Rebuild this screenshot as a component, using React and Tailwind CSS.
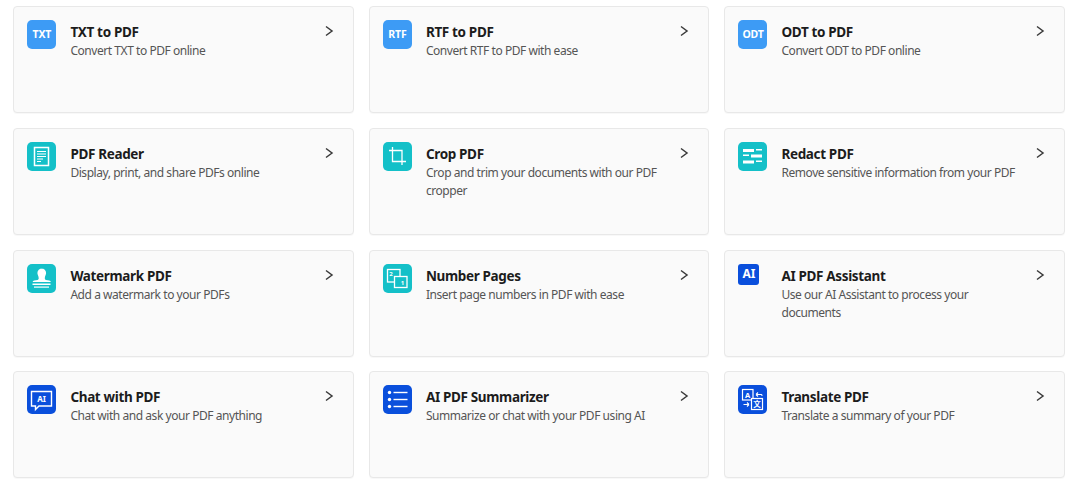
const TEAL = "bg-[#14c0c8]"
const SKY = "bg-[#3d9bf5]"
const BLUE = "bg-[#0a4fdc]"

const TextBadge = ({ label }) => (
  <span className="text-[10.5px] font-bold text-white tracking-[-0.2px]">{label}</span>
)

const ReaderIcon = () => (
  <svg width="29" height="29" viewBox="0 0 29 29" fill="none" stroke="white">
    <rect x="7.5" y="5.5" width="14" height="18" strokeWidth="1.5" />
    <path d="M10 9.5h9M10 12h9M10 14.5h9M10 17h6M10 19.5h4" strokeWidth="1.2" />
  </svg>
)

const CropIcon = () => (
  <svg width="29" height="29" viewBox="0 0 29 29" fill="none" stroke="white" strokeWidth="1.3">
    <path d="M9.5 5V19.5H23M6 8.5H19V23" />
  </svg>
)

const RedactIcon = () => (
  <svg width="29" height="29" viewBox="0 0 29 29" fill="white">
    <rect x="5" y="7" width="11" height="3" />
    <rect x="18" y="7" width="6" height="1.5" />
    <rect x="5" y="12.5" width="6" height="1.5" />
    <rect x="13" y="12.5" width="11" height="3" />
    <rect x="5" y="18.5" width="11" height="3" />
    <rect x="18" y="18.5" width="6" height="1.5" />
  </svg>
)

const StampIcon = () => (
  <svg width="29" height="29" viewBox="0 0 29 29" fill="white">
    <path d="M14.5 4.5a4.6 4.6 0 0 1 4.6 4.6c0 2-1.3 3.2-1.3 5.2 0 .9.4 1.5 1.2 1.6l3.2.5c.9.1 1.6.8 1.6 1.7H5.7c0-.9.7-1.6 1.6-1.7l3.2-.5c.8-.1 1.2-.7 1.2-1.6 0-2-1.3-3.2-1.3-5.2a4.6 4.6 0 0 1 4.6-4.6z" />
    <rect x="5.5" y="19.5" width="18" height="1.5" />
    <rect x="7" y="22.5" width="15" height="1.2" />
  </svg>
)

const NumberIcon = () => (
  <svg width="29" height="29" viewBox="0 0 29 29" fill="none" stroke="white">
    <rect x="4.5" y="5.5" width="12.5" height="12.5" strokeWidth="1.3" />
    <rect x="11.5" y="12.5" width="12.5" height="11" strokeWidth="1.3" fill="#14c0c8" />
    <text x="8" y="12" textAnchor="middle" fontSize="6" fontWeight="700" fill="white" stroke="none">2</text>
    <text x="19.5" y="21" textAnchor="middle" fontSize="6" fontWeight="700" fill="white" stroke="none">1</text>
  </svg>
)

const ChatIcon = () => (
  <svg width="29" height="29" viewBox="0 0 29 29" fill="none">
    <path d="M4.5 6.5h20v14.5H12l-3.5 3.5V21h-4z" stroke="white" strokeWidth="1.4" />
    <text x="14.5" y="16.5" textAnchor="middle" fontSize="8" fontWeight="700" fill="white">AI</text>
  </svg>
)

const ListIcon = () => (
  <svg width="29" height="29" viewBox="0 0 29 29" fill="white">
    <circle cx="6.5" cy="7.5" r="1.7" />
    <circle cx="6.5" cy="14.5" r="1.7" />
    <circle cx="6.5" cy="21.5" r="1.7" />
    <rect x="10.5" y="6.8" width="14" height="1.4" />
    <rect x="10.5" y="13.8" width="14" height="1.4" />
    <rect x="10.5" y="20.8" width="14" height="1.4" />
  </svg>
)

const TranslateIcon = () => (
  <svg width="29" height="29" viewBox="0 0 29 29" fill="none" stroke="white">
    <rect x="4.5" y="4.5" width="10.5" height="10.5" strokeWidth="1.2" />
    <rect x="13.5" y="13.5" width="11" height="11" strokeWidth="1.2" fill="#0a4fdc" />
    <text x="9.7" y="12.5" textAnchor="middle" fontSize="7.5" fontWeight="700" fill="white" stroke="none">A</text>
    <text x="19" y="22" textAnchor="middle" fontSize="7.5" fontWeight="700" fill="white" stroke="none" fontFamily="'Noto Sans CJK SC', sans-serif">文</text>
    <path d="M18 9.5h5.5c0 0 .5 0 .5 1.5M18 9.5l2-2M18 9.5l2 2M11 19.5H5.5M11 19.5l-2-2M11 19.5l-2 2" strokeWidth="1.1" />
  </svg>
)

const AiBadge = () => (
  <div className={`w-[21px] h-[21px] rounded-[3px] flex items-center justify-center text-[12px] font-bold text-white ${BLUE}`}>
    AI
  </div>
)

const tools = [
  { title: "TXT to PDF", desc: "Convert TXT to PDF online", color: SKY, icon: <TextBadge label="TXT" /> },
  { title: "RTF to PDF", desc: "Convert RTF to PDF with ease", color: SKY, icon: <TextBadge label="RTF" /> },
  { title: "ODT to PDF", desc: "Convert ODT to PDF online", color: SKY, icon: <TextBadge label="ODT" /> },
  { title: "PDF Reader", desc: "Display, print, and share PDFs online", color: TEAL, icon: <ReaderIcon /> },
  { title: "Crop PDF", desc: "Crop and trim your documents with our PDF cropper", color: TEAL, icon: <CropIcon /> },
  { title: "Redact PDF", desc: "Remove sensitive information from your PDF", color: TEAL, icon: <RedactIcon /> },
  { title: "Watermark PDF", desc: "Add a watermark to your PDFs", color: TEAL, icon: <StampIcon /> },
  { title: "Number Pages", desc: "Insert page numbers in PDF with ease", color: TEAL, icon: <NumberIcon /> },
  { title: "AI PDF Assistant", desc: "Use our AI Assistant to process your documents", color: "", icon: <AiBadge /> },
  { title: "Chat with PDF", desc: "Chat with and ask your PDF anything", color: BLUE, icon: <ChatIcon /> },
  { title: "AI PDF Summarizer", desc: "Summarize or chat with your PDF using AI", color: BLUE, icon: <ListIcon /> },
  { title: "Translate PDF", desc: "Translate a summary of your PDF", color: BLUE, icon: <TranslateIcon /> },
]

function ToolCard({ tool }) {
  return (
    <div className="h-[107px] rounded border border-[#e8e8e8] bg-[#fafafa] pl-[13px] pr-[15px] pt-[13px] flex items-start shadow-[0_1px_1px_rgba(0,0,0,0.03)]">
      <div className={`w-[29px] h-[29px] rounded-[5px] shrink-0 flex items-start justify-start ${tool.color}`}>
        <div className={tool.color ? "w-full h-full flex items-center justify-center" : ""}>{tool.icon}</div>
      </div>
      <div className="ml-[14px] flex-1 min-w-0 pr-[14px]">
        <div className="text-[13.5px] leading-[20px] font-bold text-[#1c1c1c] tracking-[-0.35px] mt-[2px]">{tool.title}</div>
        <div className="text-[12px] leading-[18px] text-[#555] tracking-[-0.45px]">{tool.desc}</div>
      </div>
      <svg width="18" height="18" viewBox="0 0 18 18" fill="none" stroke="#3a3a3a" strokeWidth="1.5" className="shrink-0 mt-[2px]">
        <path d="M6 4.5l6 4.5-6 4.5" />
      </svg>
    </div>
  )
}

export default function App() {
  return (
    <div className="w-[1080px] h-[484px] bg-white overflow-hidden font-['Noto_Sans',sans-serif]">
      <div className="ml-[13.4px] pt-[6.3px] w-[1051.6px] grid grid-cols-3 gap-x-[15px] gap-y-[14.7px]">
        {tools.map((t) => (
          <ToolCard key={t.title} tool={t} />
        ))}
      </div>
    </div>
  )
}
